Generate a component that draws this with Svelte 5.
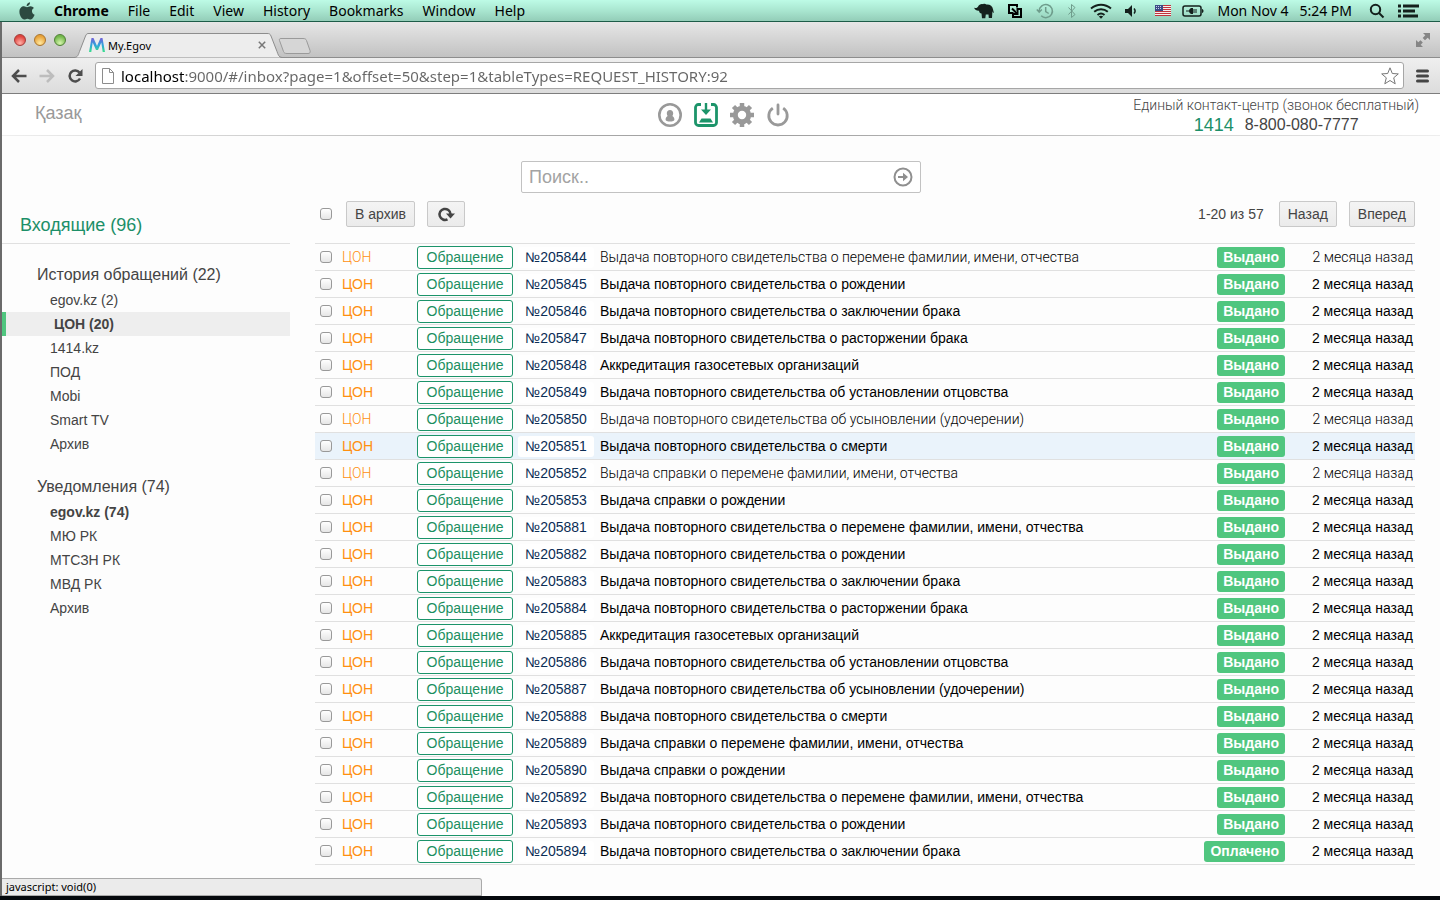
<script>
    const menus = ['File', 'Edit', 'View', 'History', 'Bookmarks', 'Window', 'Help'];

    const groups = [
        {
            title: 'История обращений (22)',
            items: ['egov.kz (2)', 'ЦОН (20)', '1414.kz', 'ПОД', 'Mobi', 'Smart TV', 'Архив'],
            active: 1
        },
        {
            title: 'Уведомления (74)',
            items: ['egov.kz (74)', 'МЮ РК', 'МТСЗН РК', 'МВД РК', 'Архив'],
            unread: 0
        }
    ];

    const NAME_CHANGE = 'Выдача повторного свидетельства о перемене фамилии, имени, отчества';
    const BIRTH = 'Выдача повторного свидетельства о рождении';
    const MARRIAGE = 'Выдача повторного свидетельства о заключении брака';
    const DIVORCE = 'Выдача повторного свидетельства о расторжении брака';
    const GAS = 'Аккредитация газосетевых организаций';
    const PATERNITY = 'Выдача повторного свидетельства об установлении отцовства';
    const ADOPTION = 'Выдача повторного свидетельства об усыновлении (удочерении)';
    const DEATH = 'Выдача повторного свидетельства о смерти';
    const NAME_INFO = 'Выдача справки о перемене фамилии, имени, отчества';
    const BIRTH_INFO = 'Выдача справки о рождении';

    // read rows are drawn in a lighter weight
    const rows = [
        { id: 205844, title: NAME_CHANGE, read: true },
        { id: 205845, title: BIRTH },
        { id: 205846, title: MARRIAGE },
        { id: 205847, title: DIVORCE },
        { id: 205848, title: GAS },
        { id: 205849, title: PATERNITY },
        { id: 205850, title: ADOPTION, read: true },
        { id: 205851, title: DEATH, hover: true },
        { id: 205852, title: NAME_INFO, read: true },
        { id: 205853, title: BIRTH_INFO },
        { id: 205881, title: NAME_CHANGE },
        { id: 205882, title: BIRTH },
        { id: 205883, title: MARRIAGE },
        { id: 205884, title: DIVORCE },
        { id: 205885, title: GAS },
        { id: 205886, title: PATERNITY },
        { id: 205887, title: ADOPTION },
        { id: 205888, title: DEATH },
        { id: 205889, title: NAME_INFO },
        { id: 205890, title: BIRTH_INFO },
        { id: 205892, title: NAME_CHANGE },
        { id: 205893, title: BIRTH },
        { id: 205894, title: MARRIAGE, status: 'Оплачено' }
    ];
</script>

<div class="screen">
    <!-- System menu bar -->
    <header class="menubar">
        <svg width="16" height="18" viewBox="0 0 16 18">
            <path fill="#2c4a40" d="M11 0.3c.2 1.9-1.500 4-3.400 3.900C7.400 2.400 9.200.5 11 .3zM8 5.200c.8 0 1.900-1 3.500-1 1.300 0 2.600.7 3.400 1.800-2.900 1.700-2.400 5.700.7 6.800-.6 1.800-2.200 4.700-3.900 4.700-1.200 0-1.700-.8-3.300-.8-1.500 0-2 .8-3.200.8C3 17.500.4 13.600.4 9.800.4 6.200 2.700 4.300 4.900 4.300c1.400 0 2.300.9 3.100.9z" />
        </svg>
        <strong>Chrome</strong>
        {#each menus as menu}
            <span>{menu}</span>
        {/each}
        <div class="tray">
            <svg width="20" height="16" viewBox="0 0 20 16">
                <path fill="#14201c" d="M0 4.500c1.500 1 3 .5 4-.8C5 1.500 7 .8 9 1.200c1-.8 2.500-.6 3.300.3 3.500-.4 6.200 1.500 6.700 4.700.3 1.500.6 2.500 1 3.300l-1 .2-.6-1.500-.4 6.800h-3.200l-.3-3.500h-2.700l-.5 3.800H8l-.5-4.700C6 10.300 5.200 9.200 5 7.700 3.300 8 .8 7.200 0 4.500z" />
            </svg>
            <svg width="16" height="16" viewBox="0 0 16 16" fill="none" stroke="#000" stroke-width="2">
                <path d="M6 10H2V2h8v2.500M9.500 6H14v8H6V9.500M5 5.500l5 5M10.500 7v4h-4" />
            </svg>
            <svg width="18" height="16" viewBox="0 0 18 16" fill="none" stroke="#6f9d8c" stroke-width="1.500">
                <path d="M3.200 8a6.600 6.600 0 1 1 2 4.800M9.700 4v4.500l3 2M.8 6.500l2.400 2.700 2.600-2.700" />
            </svg>
            <svg width="10" height="16" viewBox="0 0 10 16" fill="none" stroke="#6f9d8c">
                <path d="M1.500 4.500l6.500 7-3.500 3v-13l3.500 3-6.500 7" />
            </svg>
            <svg width="22" height="16" viewBox="0 0 22 16" fill="none" stroke="#14201c" stroke-width="2">
                <path d="M1 5.500c6-5 14-5 20 0M4.200 8.800c4-3.400 9.600-3.400 13.600 0M7.500 12c2-1.700 5-1.700 7 0" />
                <path fill="#14201c" stroke="none" d="M8.800 13.500c1.300-1 3-1 4.400 0L11 15.800z" />
            </svg>
            <svg width="12" height="16" viewBox="0 0 12 16">
                <path fill="#14201c" d="M0 6h3l4-4v12l-4-4H0z" />
                <path fill="none" stroke="#14201c" stroke-width="1.500" d="M9 5.500c1.300 1.500 1.300 3.500 0 5" />
            </svg>
            <svg class="flag" width="16" height="11" viewBox="0 0 16 11">
                <path fill="#f6efef" d="M0 0h16v11H0z" />
                <path stroke="#c1343c" d="M0 .5h16M0 2.500h16M0 4.500h16M0 6.500h16M0 8.500h16M0 10.500h16" />
                <path fill="#3b4a86" d="M0 0h8v6H0z" />
                <path stroke="#c8cfe6" stroke-dasharray="1 1" d="M1 1.500h6M1 3.500h6" />
            </svg>
            <svg class="battery" width="22" height="16" viewBox="0 0 22 16">
                <rect x="1" y="3" width="18" height="10" rx="2" fill="none" stroke="#14201c" stroke-width="1.500" />
                <path fill="#14201c" d="M20 6c2 .5 2 3.500 0 4zM4 7.500h3c.5-2 2-2.500 3-2.500h1v1.500h4v1h-4v1h4v1h-4V11h-1c-1 0-2.500-.5-3-2.500H4z" />
            </svg>
            <time>Mon Nov 4 &nbsp;&nbsp;5:24 PM</time>
            <svg class="loupe" width="16" height="16" viewBox="0 0 16 16" fill="none" stroke="#14201c" stroke-width="2">
                <circle cx="6.500" cy="6.500" r="4.700" /><path d="M10 10l4.500 4.500" />
            </svg>
            <svg width="22" height="16" viewBox="0 0 22 16" stroke="#14201c" stroke-width="3">
                <path d="M0 3h3M5 3h16M0 8h3M5 8h12M0 13h3M5 13h15" />
            </svg>
        </div>
    </header>

    <div class="window">
        <!-- Tab strip -->
        <div class="tabs">
            <i class="light red"></i>
            <i class="light yellow"></i>
            <i class="light green"></i>
            <div class="tab">
                <svg class="tab-shape" width="208" height="26" viewBox="0 0 208 26">
                    <path fill="#ededed" stroke="#8d8d8d" d="M0 25.500C4 25.500 4.500 22 5.500 19.500L11.500 4C12.500 1.500 13.500 1.500 15 1.500H193C195 1.500 196 1.500 197 4L203 19.500C204 22 204.500 25.500 208 25.500" />
                </svg>
                <svg width="16" height="16" viewBox="0 0 16 16">
                    <defs>
                        <linearGradient id="mark" x2="0" y2="1">
                            <stop stop-color="#7460d8" /><stop offset=".5" stop-color="#2fa4dc" /><stop offset="1" stop-color="#3be08a" />
                        </linearGradient>
                    </defs>
                    <path fill="url(#mark)" d="M0 15L2.500 1h2L8 9l3.500-8h2L16 15h-2.300L12.300 5.500 9 13H7L3.700 5.500 2.300 15z" />
                </svg>
                <span>My.Egov</span>
                <button class="close" aria-label="Close tab">
                    <svg width="8" height="8" viewBox="0 0 8 8" stroke="#777" stroke-width="1.500"><path d="M.8.8l6.400 6.400M7.200.8L.8 7.200" /></svg>
                </button>
            </div>
            <button class="new-tab" aria-label="New tab">
                <svg width="34" height="18" viewBox="0 0 34 18">
                    <path fill="#d6d6d6" stroke="#9a9a9a" d="M3 1.500h22c2 0 3 .5 3.500 2l3.500 10c.5 2 0 3-2 3H9c-2 0-3-.5-3.500-2l-4-11c-.4-1.300 0-2 1.500-2z" />
                </svg>
            </button>
            <svg class="expand" width="16" height="16" viewBox="0 0 16 16" fill="#858585">
                <path d="M8 1h7v7l-2.300-2.300L10 8.300 7.700 6l2.600-2.700zM1 8l2.300 2.300L5.500 8.200l2.300 2.300-2.100 2.200L8 15H1z" />
            </svg>
        </div>

        <!-- Address bar -->
        <div class="toolbar">
            <button aria-label="Back">
                <svg width="16" height="14" viewBox="0 0 16 14" fill="none" stroke="#4d4d4d" stroke-width="2.500"><path d="M15.500 7H2M8 1L2 7l6 6" /></svg>
            </button>
            <button aria-label="Forward">
                <svg width="16" height="14" viewBox="0 0 16 14" fill="none" stroke="#bdbdbd" stroke-width="2.500"><path d="M.5 7H14M8 1l6 6-6 6" /></svg>
            </button>
            <button aria-label="Reload">
                <svg width="16" height="14" viewBox="0 0 16 14">
                    <path fill="none" stroke="#4d4d4d" stroke-width="2.500" d="M12.500 3.500A5.500 5.500 0 1 0 13 9.500" /><path fill="#4d4d4d" d="M15.500 0v7H8.500z" />
                </svg>
            </button>
            <div class="address">
                <svg width="12" height="16" viewBox="0 0 12 16" fill="#fff" stroke="#8c8c8c"><path d="M.5.5h7l4 4v11H.5zM7.500.5v4h4" /></svg>
                <input type="text" aria-label="Address" value="localhost:9000/#/inbox?page=1&offset=50&step=1&tableTypes=REQUEST_HISTORY:92" />
                <svg width="18" height="18" viewBox="0 0 18 18" fill="#fff" stroke="#777"><path stroke-linejoin="round" d="M9 .8l2.300 5.700 6 .4-4.600 3.900 1.500 6L9 13.500l-5.200 3.300 1.500-6L.7 6.900l6-.4z" /></svg>
            </div>
            <button aria-label="Menu">
                <svg width="13" height="14" viewBox="0 0 13 14" stroke="#444" stroke-width="3" stroke-linecap="round"><path d="M1.500 2h10M1.500 7h10M1.500 12h10" /></svg>
            </button>
        </div>

        <div class="page">
            <!-- Site header -->
            <div class="site-header">
                <a class="lang" href="#/kz">Қазақ</a>
                <nav>
                    <a href="#/profile" aria-label="Профиль">
                        <svg width="24" height="24" viewBox="0 0 24 24">
                            <circle cx="12" cy="12" r="10.700" fill="none" stroke="#999" stroke-width="2.600" />
                            <path fill="#999" d="M12 7c2 0 3.200 1.400 3.200 3.300 0 1.200-.3 2-.8 2.800 1.300.9 2 2 2 3.400 0 .8-.5 1.200-1.200 1.500-1 .4-2 .5-3.200.5s-2.200-.1-3.200-.5c-.7-.3-1.200-.7-1.200-1.500 0-1.400.7-2.500 2-3.400-.5-.8-.8-1.600-.8-2.800C8.800 8.400 10 7 12 7z" />
                        </svg>
                    </a>
                    <a href="#/inbox" aria-label="Входящие">
                        <svg width="24" height="24" viewBox="0 0 24 24">
                            <path fill="none" stroke="#1c946a" stroke-width="2.800" d="M7 1.500H4.500a3 3 0 0 0-3 3v15a3 3 0 0 0 3 3h15a3 3 0 0 0 3-3v-15a3 3 0 0 0-3-3H17" />
                            <path fill="#1c946a" d="M10.800 0h2.400v6.500H17L12 12 7 6.500h3.800zM7.500 15.500h9l2.500 4H5z" />
                        </svg>
                    </a>
                    <a href="#/settings" aria-label="Настройки">
                        <svg width="24" height="24" viewBox="0 0 24 24">
                            <circle cx="12" cy="12" r="6.700" fill="none" stroke="#999" stroke-width="5" />
                            <path stroke="#999" stroke-width="4.500" d="M12 0v4M12 20v4M0 12h4M20 12h4M3.500 3.500l3 3M17.500 17.500l3 3M20.500 3.500l-3 3M6.500 17.500l-3 3" />
                        </svg>
                    </a>
                    <a href="#/logout" aria-label="Выход">
                        <svg width="24" height="24" viewBox="0 0 24 24" fill="none" stroke="#999" stroke-width="2.800">
                            <path d="M6.800 5.200a9.200 9.200 0 1 0 10.400 0" /><path stroke-linecap="round" d="M12 2v9" />
                        </svg>
                    </a>
                </nav>
                <div class="contacts">
                    <p>Единый контакт-центр (звонок бесплатный)</p>
                    <p class="phones"><b>1414</b><span>8-800-080-7777</span></p>
                </div>
            </div>

            <form class="search">
                <input type="text" aria-label="Поиск" placeholder="Поиск.." />
                <button type="button" aria-label="Найти">
                    <svg width="20" height="20" viewBox="0 0 20 20">
                        <circle cx="10" cy="10" r="8.500" fill="none" stroke="#8f8f8f" stroke-width="2" />
                        <path fill="#8f8f8f" d="M5 9h5V5.800l5 4.200-5 4.200V11H5z" />
                    </svg>
                </button>
            </form>

            <div class="content">
                <!-- Folders -->
                <aside>
                    <h1>Входящие (96)</h1>
                    {#each groups as group}
                        <h2>{group.title}</h2>
                        <ul>
                            {#each group.items as item, i}
                                <li class:active={group.active === i} class:unread={group.unread === i}>
                                    <a href="#/inbox">{item}</a>
                                </li>
                            {/each}
                        </ul>
                    {/each}
                </aside>

                <main>
                    <div class="actions">
                        <input type="checkbox" aria-label="Выбрать все" />
                        <button class="btn">В архив</button>
                        <button class="btn refresh" aria-label="Обновить">
                            <svg width="18" height="16" viewBox="0 0 18 16">
                                <path fill="none" stroke="#444" stroke-width="2.500" d="M10.500 13.300A5.500 5.500 0 1 1 13.500 8" />
                                <path fill="#444" d="M9 7.500h9l-4.500 5z" />
                            </svg>
                        </button>
                        <span class="range">1-20 из 57</span>
                        <button class="btn">Назад</button>
                        <button class="btn">Вперед</button>
                    </div>

                    <table>
                        <colgroup>
                            <col class="c-check" /><col class="c-source" /><col class="c-kind" /><col class="c-number" />
                            <col /><col class="c-status" /><col class="c-time" />
                        </colgroup>
                        <tbody>
                            {#each rows as row (row.id)}
                                <tr class:read={row.read} class:hover={row.hover}>
                                    <td class="check"><input type="checkbox" aria-label="№{row.id}" /></td>
                                    <td class="source">ЦОН</td>
                                    <td><span class="kind">Обращение</span></td>
                                    <td><a class="number" href="#/inbox">№{row.id}</a></td>
                                    <td class="title">{row.title}</td>
                                    <td class="right"><span class="status">{row.status ?? 'Выдано'}</span></td>
                                    <td class="right time">2 месяца назад</td>
                                </tr>
                            {/each}
                        </tbody>
                    </table>
                </main>
            </div>

            <div class="statusbar">javascript: void(0)</div>
        </div>
    </div>
</div>

<style>
    :global(body) {
        background: #05090d;
    }

    .screen {
        display: flex;
        flex-direction: column;
        min-height: 100vh;
        box-sizing: border-box;
        padding-bottom: 4px;
        font-family: "Liberation Sans", Arial, sans-serif;
        font-size: 14px;
        color: #444;
    }

    button {
        border: 0;
        padding: 0;
        background: none;
        font: inherit;
        color: inherit;
    }

    a {
        color: inherit;
        text-decoration: none;
    }

    svg {
        display: block;
        flex: none;
    }

    h1, h2, p, ul {
        margin: 0;
        padding: 0;
        font-weight: normal;
        list-style: none;
    }

    /* Menu bar */
    .menubar {
        display: flex;
        align-items: center;
        gap: 19px;
        height: 21px;
        padding: 0 20px 0 19px;
        border-bottom: 1px solid #1d5c48;
        background: linear-gradient(#bdfbe6, #a9e6d0 50%, #93cdb8);
        font-family: "Noto Sans", "Open Sans", sans-serif;
        font-size: 14px;
        color: #000;
        white-space: nowrap;
    }

    .tray {
        display: flex;
        align-items: center;
        gap: 13px;
        margin-left: auto;
    }

    .flag {
        margin-left: 5px;
    }

    .battery {
        margin-left: -2px;
    }

    .loupe {
        margin-left: 4px;
    }

    /* Browser window */
    .window {
        display: flex;
        flex-direction: column;
        flex: 1;
        border-left: 2px solid #6b6b6b;
        background: #fdfdfd;
    }

    .tabs {
        display: flex;
        align-items: center;
        gap: 8px;
        height: 35px;
        padding: 0 9px 0 12px;
        border-bottom: 1px solid #8d8d8d;
        background: linear-gradient(#e6e6e6, #c2c2c2);
    }

    .light {
        width: 10px;
        height: 10px;
        border: 1px solid;
        border-radius: 50%;
    }

    .red {
        border-color: #a33a38;
        background: radial-gradient(circle at 50% 80%, #ffb0a8, #e0443e 70%);
    }

    .yellow {
        border-color: #a9742c;
        background: radial-gradient(circle at 50% 80%, #ffe9a0, #e8a33a 70%);
    }

    .green {
        border-color: #4f8036;
        background: radial-gradient(circle at 50% 80%, #d6f5ae, #74b84c 70%);
    }

    .tab {
        display: flex;
        align-items: center;
        align-self: flex-end;
        position: relative;
        box-sizing: border-box;
        width: 208px;
        height: 24px;
        padding: 0 16px 0 15px;
        gap: 3px;
        font-family: "Noto Sans", "Open Sans", sans-serif;
        font-size: 11px;
        color: #000;
    }

    .tab-shape {
        position: absolute;
        left: 0;
        bottom: -1px;
    }

    .tab > :not(.tab-shape) {
        position: relative;
    }

    .close {
        margin-left: auto;
    }

    .new-tab {
        margin-left: -12px;
        margin-top: 12px;
    }

    .expand {
        margin-left: auto;
    }

    .toolbar {
        display: flex;
        align-items: center;
        gap: 12px;
        height: 35px;
        padding: 0 11px 0 9px;
        border-bottom: 1px solid #7d7d7d;
        background: linear-gradient(#efefef, #dcdcdc);
    }

    .address {
        display: flex;
        align-items: center;
        flex: 1;
        gap: 7px;
        box-sizing: border-box;
        height: 27px;
        padding: 0 4px 0 6px;
        border: 1px solid #a6a6a6;
        border-radius: 3px;
        background: #fff;
    }

    .address input {
        flex: 1;
        min-width: 0;
        border: 0;
        padding: 0;
        outline: 0;
        background: linear-gradient(90deg, #000 64px, #666 64px);
        background-clip: text;
        color: transparent;
        font-family: "Noto Sans", "Open Sans", sans-serif;
        font-size: 15px;
    }

    /* Page */
    .page {
        position: relative;
        flex: 1;
        padding-bottom: 31px;
    }

    .site-header {
        display: grid;
        grid-template-columns: 1fr auto 1fr;
        height: 42px;
        padding: 0 21px 0 27px;
        background: linear-gradient(90deg, #eee, #999 50%, #eee) bottom / 100% 1px no-repeat #fff;
    }

    .lang {
        padding-left: 6px;
        font-size: 18px;
        line-height: 38px;
        color: #999;
    }

    nav {
        display: flex;
        align-items: center;
        gap: 12px;
    }

    .contacts {
        justify-self: end;
        text-align: center;
    }

    .contacts p {
        line-height: 20px;
        padding-top: 1px;
        white-space: nowrap;
        font-family: Roboto, sans-serif;
        font-weight: 300;
    }

    .contacts .phones {
        display: flex;
        justify-content: center;
        gap: 11px;
        padding: 0;
        font-family: inherit;
        font-size: 16px;
        font-weight: normal;
    }

    .phones b {
        font-weight: normal;
        font-size: 18px;
        color: #1c8f68;
    }

    .search {
        display: flex;
        align-items: center;
        box-sizing: border-box;
        width: 400px;
        height: 32px;
        margin: 25px auto 0;
        padding: 0 7px;
        border: 1px solid #c2c2c2;
        border-radius: 2px;
        background: #fff;
    }

    .search input {
        flex: 1;
        border: 0;
        padding: 0;
        outline: 0;
        font: inherit;
        font-size: 18px;
    }

    .search input::placeholder {
        color: #a3a3a3;
    }

    .content {
        display: grid;
        grid-template-columns: 288px minmax(0, 1fr);
        gap: 25px;
        padding-right: 25px;
    }

    aside h1 {
        height: 51px;
        padding: 14px 0 0 18px;
        box-sizing: border-box;
        border-bottom: 1px solid #e0e0e0;
        font-size: 18px;
        line-height: 36px;
        color: #1c8f68;
    }

    aside h2 {
        margin: 19px 0 1px;
        padding-left: 35px;
        font-size: 16px;
        line-height: 24px;
    }

    aside li {
        padding-left: 48px;
        line-height: 24px;
    }

    aside .active {
        border-left: 4px solid #50c67f;
        background: #eee;
        font-weight: bold;
    }

    aside .unread {
        font-weight: bold;
    }

    .actions {
        display: flex;
        align-items: center;
        gap: 12px;
        height: 42px;
        margin-bottom: 8px;
        padding-left: 5px;
    }

    .actions input {
        margin-right: 2px;
    }

    .btn {
        height: 26px;
        padding: 0 8px;
        border: 1px solid #c9c9c9;
        border-radius: 2px;
        background: linear-gradient(#f4f4f4, #ebebeb);
    }

    .refresh {
        padding: 0 9px;
    }

    .range {
        margin-left: auto;
        margin-right: 3px;
    }

    input[type="checkbox"] {
        appearance: none;
        box-sizing: border-box;
        flex: none;
        width: 12px;
        height: 12px;
        margin-top: 0;
        margin-bottom: 0;
        margin-left: 0;
        border: 1px solid #999;
        border-radius: 3px;
        background: linear-gradient(#fff, #e6e6e6);
    }

    table {
        width: 100%;
        table-layout: fixed;
        border-collapse: collapse;
        border-top: 1px solid #e0e0e0;
        color: #000;
    }

    .c-check { width: 27px; }
    .c-source { width: 75px; }
    .c-kind { width: 101px; }
    .c-number { width: 82px; }
    .c-status { width: 100px; }
    .c-time { width: 130px; }

    td {
        height: 26px;
        padding: 0;
        border-bottom: 1px solid #e0e0e0;
        line-height: 21px;
        white-space: nowrap;
    }

    td.check {
        padding-left: 5px;
    }

    .check input {
        display: block;
    }

    .source {
        color: #ff8f0f;
    }

    .kind {
        display: block;
        width: 94px;
        border: 1px solid #1c946a;
        border-radius: 3px;
        background: #fff;
        color: #1c8f5f;
        text-align: center;
    }

    .number {
        display: block;
        width: 76px;
        border-radius: 3px;
        background: #fff;
        color: #0b2d55;
        text-align: center;
    }

    .right {
        text-align: right;
    }

    .time {
        padding-right: 2px;
    }

    .read .source,
    .read .title,
    .read .time {
        font-family: Roboto, sans-serif;
        font-weight: 300;
    }

    .hover {
        background: #eaf3fb;
    }

    .status {
        display: inline-block;
        padding: 0 6px;
        border-radius: 3px;
        background: #50c67f;
        color: #fff;
        font-weight: bold;
    }

    .statusbar {
        position: absolute;
        left: 0;
        bottom: 0;
        box-sizing: border-box;
        width: 480px;
        height: 18px;
        padding-left: 4px;
        border: 1px solid #aaa;
        border-left: 0;
        border-radius: 0 3px 0 0;
        background: #ebebeb;
        font-family: "Noto Sans", "Open Sans", sans-serif;
        font-size: 11px;
        line-height: 16px;
        color: #000;
    }
</style>
